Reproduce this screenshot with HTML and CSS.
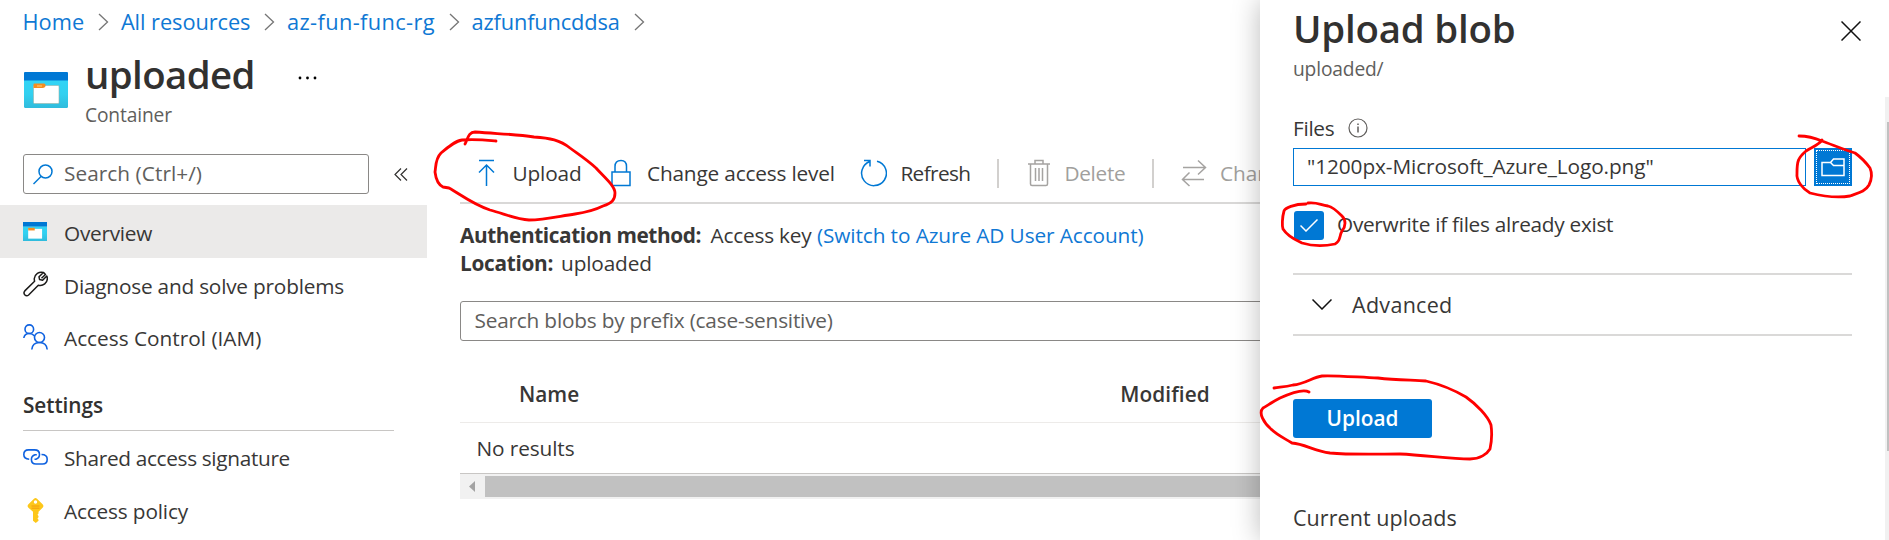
FILE: index.html
```
<!DOCTYPE html>
<html lang="en">
<head>
<meta charset="utf-8">
<title>uploaded - Container</title>
<link rel="stylesheet" href="styles.css">
</head>
<body>
<div class="page">
  <header class="header">
    <nav class="crumbs">
      <a class="t-home">Home</a>
      <svg class="crumb-sep" width="11" height="20" viewBox="0 0 11 20"><path d="M1 2 L9.500 10 L1 18"/></svg>
      <a class="t-all">All resources</a>
      <svg class="crumb-sep" width="11" height="20" viewBox="0 0 11 20"><path d="M1 2 L9.500 10 L1 18"/></svg>
      <a class="t-rg">az-fun-func-rg</a>
      <svg class="crumb-sep" width="11" height="20" viewBox="0 0 11 20"><path d="M1 2 L9.500 10 L1 18"/></svg>
      <a class="t-sa">azfunfuncddsa</a>
      <svg class="crumb-sep" width="11" height="20" viewBox="0 0 11 20"><path d="M1 2 L9.500 10 L1 18"/></svg>
    </nav>
    <div class="heading">
      <svg class="heading-icon" width="44" height="36" viewBox="0 0 44 36">
        <defs><linearGradient id="cyan" x1="0" y1="0" x2="0" y2="1"><stop offset="0" stop-color="#32d4f5"/><stop offset=".5" stop-color="#32d0f0"/><stop offset="1" stop-color="#30bbdc"/></linearGradient></defs>
        <path d="M0 8H44V34.500Q44 36 42.500 36H1.500Q0 36 0 34.500Z" fill="url(#cyan)"/>
        <path d="M1 0H43Q44 0 44 1V8.500H0V1Q0 0 1 0Z" fill="#0078d4"/>
        <path d="M9.500 14H21L22 13.500H34Q35 13.500 35 14.500V30.500Q35 31.500 34 31.500H10.500Q9.500 31.500 9.500 30.500Z" fill="#fff" stroke="#9ab3a8" stroke-width=".6"/>
        <path d="M10.500 11.500H20Q21.500 11.500 21.500 13Q21.500 16 18.500 16H9.500V12.500Q9.500 11.500 10.500 11.500Z" fill="#f78d1e"/>
        <path d="M13 14H18" stroke="#ffcf70" stroke-width="1"/>
      </svg>
      <div class="heading-text">
        <div class="title-row"><h1 class="t-title">uploaded</h1>
          <svg class="more" width="20" height="4" viewBox="0 0 20 4"><circle cx="2" cy="2" r="1.400"/><circle cx="9.500" cy="2" r="1.400"/><circle cx="17" cy="2" r="1.400"/></svg></div>
        <div class="subtitle"><span class="t-container">Container</span></div>
      </div>
    </div>
  </header>

  <div class="body">
    <aside class="sidebar">
      <div class="side-search">
        <div class="side-box">
          <svg width="20" height="21" viewBox="0 0 20 21" fill="none" stroke="#0078d4" stroke-width="1.500"><circle cx="12.500" cy="7.500" r="6.500"/><path d="M8 12.500 L.5 20"/></svg>
          <span class="t-search">Search (Ctrl+/)</span>
        </div>
        <svg class="collapse" width="14" height="13" viewBox="0 0 14 13"><path d="M7 .5 L1 6.500 L7 12.500 M13 .5 L7 6.500 L13 12.500"/></svg>
      </div>
      <div class="nav-row active">
        <span class="nav-icon"><svg width="24" height="19" viewBox="0 0 44 36" preserveAspectRatio="none"><path d="M0 8H44V36H0Z" fill="url(#cyan)"/><path d="M0 0H44V8.500H0Z" fill="#0078d4"/><path d="M9.500 13H35V31.500H9.500Z" fill="#fff"/><path d="M9.500 11H21.500V16H9.500Z" fill="#f78d1e"/></svg></span>
        <span class="t-overview">Overview</span>
      </div>
      <div class="nav-row">
        <span class="nav-icon"><svg width="25" height="26" viewBox="0 0 25 26" fill="none" stroke="#1b1a19" stroke-width="1.500" stroke-linejoin="round"><path d="M20.500 1.500C16 .2 11.800 3 11.300 7.500Q11.200 9 11.600 10.300L1.800 19.900Q.2 21.800 1.700 23.700Q3.600 25.600 5.600 24L15.300 14.200C20 15.400 24.700 12 24.300 7Q24.200 5.800 23.800 5L19.600 9.300L16.600 8.600L16 5.800Z"/><path d="M20.500 1.500L22.500 3.500L18.500 7.200"/></svg></span>
        <span class="t-diagnose">Diagnose and solve problems</span>
      </div>
      <div class="nav-row">
        <span class="nav-icon"><svg width="25" height="26" viewBox="0 0 25 26" fill="none" stroke="#0f62e0" stroke-width="1.600"><circle cx="6.300" cy="5.200" r="4.300"/><circle cx="16.500" cy="13.500" r="5"/><path d="M.8 14 Q1.500 9.500 6.300 9.500 Q9.500 9.500 11.500 12 M8.800 25.500 Q9.500 18.500 16.500 18.500 Q23.500 18.500 24.200 25.500"/></svg></span>
        <span class="t-iam">Access Control (IAM)</span>
      </div>
      <h2 class="section"><span class="t-settings">Settings</span></h2>
      <div class="nav-row">
        <span class="nav-icon"><svg width="25" height="16" viewBox="0 0 25 16" fill="none" stroke="#0f62e0" stroke-width="1.600"><path d="M6.200 10.300 Q.8 10 .8 5.600 Q.8 .9 5.500 .9 H11.500 Q16.500 .9 16.500 5.500 Q16.500 9 13 10.200 H11.500"/><path d="M18.500 5.500 Q24.200 5.500 24.200 10.200 Q24.200 15 19.500 15 H13 Q8.400 15 8.400 10.500 Q8.400 7 12 5.800 H13.800"/></svg></span>
        <span class="t-sas">Shared access signature</span>
      </div>
      <div class="nav-row">
        <span class="nav-icon key"><svg width="17" height="25" viewBox="0 0 17 25"><path fill="#fdc71a" d="M7 .7Q8.500 -.6 10 .7L15.800 6.500Q17 8 15.800 9.500L11.500 13.800V15.500L10.500 16.700L11.500 18V19.200L10.500 20.500L11.500 21.700V22.700L8.800 25L6 22.700V13.800L1.200 9.500Q0 8 1.200 6.500Z"/><circle cx="8.500" cy="4" r="1.700" fill="#fff"/><path d="M4.500 8H12.500M4.500 10.200H12.500" stroke="#f29a0c" stroke-width="1"/></svg></span>
        <span class="t-policy">Access policy</span>
      </div>
    </aside>

    <main class="content">
      <div class="toolbar">
        <svg class="i-up" width="17" height="28" viewBox="0 0 17 28"><path d="M1 1.500H16M8.500 6V27M1 13.500L8.500 6L16 13.500"/></svg>
        <span class="t-upload">Upload</span>
        <svg class="i-lock" width="20" height="28" viewBox="0 0 20 28"><path d="M1 13H19V26.500H1ZM4 13V7.500Q4 1.500 10 1.500Q15.500 1.500 15.500 7.500V13"/></svg>
        <span class="t-level">Change access level</span>
        <svg class="i-refresh" width="27" height="28" viewBox="0 0 27 28"><path d="M17 2.200A12.400 12.400 0 1 1 10 2.500M4 1.500H10V7.500"/></svg>
        <span class="t-refresh">Refresh</span>
        <i class="sep s1"></i>
        <svg class="i-trash off" width="22" height="28" viewBox="0 0 22 28"><path d="M0 5H22M2.500 5V25Q2.500 26.500 4 26.500H18Q19.500 26.500 19.500 25V5M7 5V1.500H15V5M7.500 9V22M11 9V22M14.500 9V22"/></svg>
        <span class="t-delete dim">Delete</span>
        <i class="sep s2"></i>
        <svg class="i-swap off" width="26" height="28" viewBox="0 0 26 28"><path d="M2 8.500H24.500M17 1.500L24.500 8.500L17 15.500M23 20.500H1.500M8.500 13.500L1.500 20.500L8.500 27"/></svg>
        <span class="t-change dim">Change</span>
      </div>
      <div class="info">
        <div><b class="t-auth">Authentication method:</b><span class="t-key">Access key</span><a class="t-switch">(Switch to Azure AD User Account)</a></div>
        <div><b class="t-loc">Location:</b><span class="t-locv">uploaded</span></div>
      </div>
      <div class="blob-search"><span class="t-blobs">Search blobs by prefix (case-sensitive)</span></div>
      <div class="table-head"><span class="t-name">Name</span><span class="t-modified">Modified</span></div>
      <div class="table-row"><span class="t-none">No results</span></div>
      <div class="hscroll"><svg width="25" height="25" viewBox="0 0 25 25"><path d="M9 12.500L15 7V18Z" fill="#a3a3a3"/></svg><div class="hthumb"></div></div>
    </main>
  </div>

  <section class="panel">
    <div class="panel-top">
      <div>
        <h1 class="panel-title"><span class="t-blob">Upload blob</span></h1>
        <div class="panel-sub"><span class="t-path">uploaded/</span></div>
      </div>
      <svg class="close" width="20" height="20" viewBox="0 0 20 20"><path d="M.5 .5L19.500 19.500M19.500 .5L.5 19.500"/></svg>
    </div>
    <div class="field-label"><span class="t-files">Files</span>
      <svg width="20" height="20" viewBox="0 0 20 20" fill="none" stroke="#605e5c" stroke-width="1.200"><circle cx="10" cy="10" r="9"/><path d="M10 8.500V14.500M10 5.500V7" stroke-width="1.500"/></svg></div>
    <div class="file-row">
      <div class="file-box"><span class="t-file">"1200px-Microsoft_Azure_Logo.png"</span></div>
      <div class="browse"><div class="focus"><svg width="24" height="19" viewBox="0 0 24 19" fill="none" stroke="#fff" stroke-width="1.500"><path d="M1 4.500H9.500L12.500 1H23V17.500H1ZM9.500 4.500L12.500 7.500H23"/></svg></div></div>
    </div>
    <div class="check-row">
      <div class="check"><svg width="18" height="13" viewBox="0 0 18 13"><path d="M.5 6.500L6 12L17.500 .5" fill="none" stroke="#fff" stroke-width="1.500"/></svg></div>
      <span class="t-over">Overwrite if files already exist</span>
    </div>
    <div class="advanced">
      <svg width="20" height="11" viewBox="0 0 20 11"><path d="M.5 .5L10 10L19.500 .5" fill="none" stroke="#111" stroke-width="1.500"/></svg>
      <span class="t-adv">Advanced</span>
    </div>
    <div class="button"><span class="t-btn">Upload</span></div>
    <div class="current"><span class="t-cur">Current uploads</span></div>
    <div class="vscroll"><div class="vthumb"></div></div>
  </section>

  <svg class="ink" width="1889" height="540" viewBox="0 0 1889 540">
    <path d="M496 141C485 140 475 139 462 140C455 141 448 147 441 153C435 159 436 167 435 172C436 180 439 185 443 187L449 188C460 194 472 204 490 210C505 214 515 219 529 220C545 220 560 216 575 214C588 212 595 210 603 206C612 203 615 200 615 193C615 186 605 178 596 168C586 159 578 154 570 148C560 140 550 138 534 137C515 134 500 134 475 132C468 132 468 139 465 144"/>
    <path d="M1306 204C1294 204 1285 208 1284 211C1282 218 1282 226 1283 229C1288 237 1296 240 1302 243C1312 246 1325 246 1335 244C1341 241 1339 236 1342 231C1346 226 1346 220 1342 216C1337 211 1333 207 1328 206C1320 205 1318 202 1308 203"/>
    <path d="M1799 136C1808 136 1815 138 1822 141C1833 145 1845 150 1855 153C1862 158 1867 164 1870 168C1873 175 1871 181 1869 185C1865 192 1858 193 1850 196C1838 198 1822 196 1810 193C1803 189 1796 181 1797 173C1797 161 1798 158 1806 151C1812 147 1819 145 1822 140"/>
    <path d="M1309 392C1304 389 1291 393 1280 398C1272 402 1267 406 1263 408C1258 413 1264 423 1271 429C1277 435 1284 438 1292 443C1305 444 1314 451 1330 453C1350 455 1380 454 1400 454C1425 455 1450 459 1470 459C1480 459 1487 454 1490 449C1492 440 1492 432 1491 425C1488 416 1476 404 1466 397C1454 390 1439 384 1426 381C1410 380 1395 380 1378 378C1355 377 1330 375 1322 376C1313 377 1305 384 1293 385C1285 387 1280 387 1274 388"/>
  </svg>
</div>
</body>
</html>
```
FILE: styles.css
```
* { box-sizing: border-box; }
body { margin: 0; background: #fff; color: #383736; font: 20.8px/28px "Open Sans", "Noto Sans", sans-serif; }
h1, h2 { margin: 0; font-weight: 600; color: #323130; }
svg { display: block; flex: none; }
span, a, b, h1 { white-space: nowrap; }
a { color: #0f78d4; }
.page { position: relative; width: 1889px; height: 540px; overflow: hidden; }

/* Header */
.header { height: 130px; }
.crumbs { display: flex; align-items: center; height: 42px; padding: 1px 0 0 22.5px; font-size: 21.8px; line-height: 42px; }
.crumb-sep { fill: none; stroke: #767676; stroke-width: 1.3; margin: 0 11.6px 0 14px; }
.heading { display: flex; padding-left: 24px; gap: 17px; }
.heading-icon { margin-top: 30px; }
.heading-text { padding-top: 7px; }
.title-row { display: flex; align-items: center; height: 50px; }
.title-row h1 { font-size: 38.4px; line-height: 50px; }
.more { margin-left: 43px; margin-top: 7px; }
.subtitle { font-size: 19.2px; line-height: 31px; color: #605e5c; }

/* Sidebar */
.body { display: flex; height: 410px; }
.sidebar { flex: none; width: 427px; margin-right: 33px; }
.side-search { display: flex; align-items: flex-start; height: 75px; padding: 24px 0 0 23px; }
.side-box { display: flex; align-items: center; width: 346px; height: 40px; border: 1px solid #8a8886; border-radius: 3px; padding-left: 9px; gap: 11px; color: #605e5c; }
.side-box span { padding-bottom: 2px; }
.collapse { fill: none; stroke: #323130; stroke-width: 1.2; margin: 14px 0 0 25px; }
.nav-row { display: flex; align-items: center; height: 52.7px; padding-left: 23px; }
.active { background: #ebeae9; }
.nav-icon { width: 41px; }
.key { padding-left: 4px; }
.nav-row span + span { padding-top: 3px; }
.section { height: 68px; padding: 28px 0 0 23px; font-size: 20.8px; line-height: 28px; }
.section::after { content: ""; display: block; width: 371px; height: 1px; margin-top: 11px; background: #c8c6c4; }
.section + .nav-row span + span, .section + .nav-row + .nav-row span + span { padding-top: 2px; }

/* Main content */
.content { flex: none; width: 830px; }
.toolbar { display: flex; align-items: center; height: 74px; padding: 14px 0 0 18px; border-bottom: 2px solid #d9d8d7; }
.toolbar svg { fill: none; stroke: #0078d4; stroke-width: 1.5; }
.toolbar .off { stroke: #a5a3a1; }
.dim { color: #a19f9d; }
.sep { width: 2px; height: 29px; background: #d2d0ce; flex: none; }
.i-up { margin-right: 17.5px; }
.i-lock { margin: 0 16px 0 29.5px; }
.i-refresh { margin: 0 13.500px 0 25px; }
.s1 { margin: 0 28.500px 0 27px; }
.i-trash { margin-right: 14.500px; }
.s2 { margin: 0 27px; }
.i-swap { margin-right: 12.500px; }
.info { padding-top: 17px; height: 97px; }
.info > div { display: flex; height: 28px; }
.blob-search { display: flex; align-items: center; height: 40px; border: 1px solid #8a8886; border-radius: 3px; padding: 0 0 2px 13.500px; color: #605e5c; }
.table-head { display: flex; height: 82px; padding: 39px 0 0 59px; border-bottom: 1px solid #edebe9; font-weight: 600; }
.table-row { height: 51px; padding: 11px 0 0 16.500px; border-bottom: 1px solid #c8c6c4; }
.hscroll { display: flex; height: 25px; background: #f1f1f1; }
.hthumb { flex: 1; height: 21px; margin-top: 2px; background: #c1c1c1; }

/* Upload panel */
.panel { position: absolute; left: 1260px; top: 0; width: 629px; height: 540px; background: #fff; box-shadow: 0 0 26px rgba(0,0,0,.27); padding: 0 37px 0 33px; }
.panel-top { display: flex; justify-content: space-between; height: 114px; }
.panel-title { font-size: 38.4px; line-height: 52px; padding-top: 2px; }
.panel-sub { font-size: 19.2px; line-height: 28px; padding-top: 1px; color: #605e5c; }
.close { fill: none; stroke: #111; stroke-width: 1.5; margin: 21px -9px 0 0; }
.field-label { display: flex; align-items: center; gap: 14px; height: 34px; padding-bottom: 6px; }
.file-row { display: flex; justify-content: space-between; height: 38px; }
.file-box { width: 513px; border: 1px solid #0078d4; padding: 3px 0 0 13px; }
.browse { width: 38px; padding: 2px; background: #0078d4; }
.focus { display: flex; align-items: center; justify-content: center; height: 34px; border: 1px dotted #fff; }
.check-row { display: flex; height: 87px; padding: 25px 0 0 1px; }
.check-row span { margin-top: -1px; }
.check { display: flex; align-items: center; justify-content: center; width: 30px; height: 29px; margin-right: 13px; border-radius: 3px; background: #0078d4; }
.advanced { display: flex; align-items: center; height: 63px; border: solid #dad9d8; border-width: 2px 0; padding-left: 19px; gap: 20px; font-size: 21.5px; }
.button { display: flex; align-items: center; justify-content: center; width: 139px; height: 39px; margin-top: 63px; padding-bottom: 2px; border-radius: 3px; background: #0078d4; color: #fff; font-weight: 600; }
.current { padding-top: 66px; font-size: 21.5px; }
.vscroll { position: absolute; right: 0; top: 97px; width: 4px; height: 443px; background: #f1f1f1; padding: 25px 0 0 2px; }
.vthumb { height: 329px; background: #c1c1c1; }

/* Pen marks */
.ink { position: absolute; left: 0; top: 0; fill: none; stroke: #f00; stroke-width: 2.8; stroke-linecap: round; stroke-linejoin: round; }

/* Text tracking */
.t-home { letter-spacing: .05px; }
.t-all { letter-spacing: -.07px; }
.t-rg { letter-spacing: .37px; }
.t-sa { letter-spacing: -.15px; }
.t-title { letter-spacing: -.6px; }
.t-container { letter-spacing: -.13px; }
.t-search { letter-spacing: .05px; }
.t-overview { letter-spacing: -.27px; }
.t-diagnose { letter-spacing: -.21px; }
.t-settings { letter-spacing: -.07px; }
.t-sas { letter-spacing: -.33px; }
.t-policy { letter-spacing: -.16px; }
.t-upload { letter-spacing: -.16px; }
.t-level { letter-spacing: -.17px; }
.t-refresh { letter-spacing: -.62px; }
.t-delete { letter-spacing: -.3px; }
.t-auth { letter-spacing: -.41px; }
.t-key { letter-spacing: -.2px; margin: 0 5.5px 0 9.5px; }
.t-switch { letter-spacing: -.1px; }
.t-loc { letter-spacing: -.3px; }
.t-locv { letter-spacing: -.15px; margin-left: 8px; }
.t-blobs { letter-spacing: -.2px; }
.t-modified { margin-left: 541px; letter-spacing: .1px; }
.t-none { letter-spacing: -.1px; }
.t-blob { letter-spacing: -.2px; }
.t-path { letter-spacing: -.15px; }
.t-files { letter-spacing: -.3px; }
.t-file { letter-spacing: -.09px; }
.t-over { letter-spacing: -.29px; }
.t-adv { letter-spacing: .3px; }
.t-cur { letter-spacing: .06px; }
```
